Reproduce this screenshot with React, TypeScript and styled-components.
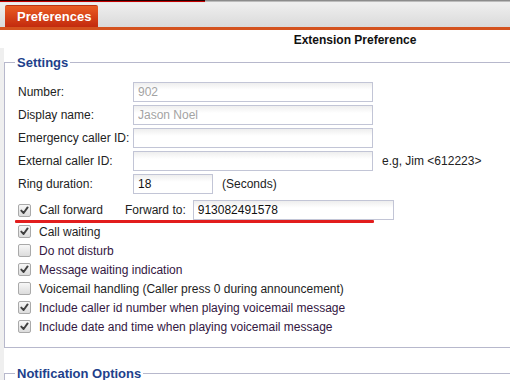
import React from "react";
import styled, { createGlobalStyle } from "styled-components";

const GlobalStyle = createGlobalStyle`
  html, body {
    margin: 0;
    padding: 0;
    background: #ffffff;
    overflow: hidden;
  }
  body {
    font-family: "Liberation Sans", Arial, sans-serif;
    font-size: 12px;
    color: #222222;
  }
`;

const Page = styled.div`
  width: 510px;
  height: 380px;
  overflow: hidden;
`;

const TopStrip = styled.div`
  display: flex;
  height: 3px;
`;

const StripSegment = styled.div<{ $active?: boolean }>`
  flex: ${(p) => (p.$active ? "0 0 205px" : "1")};
  background: ${(p) =>
    p.$active
      ? "linear-gradient(#220000 0 1px, #c40000 1px 2px, #e8e8e8 2px)"
      : "linear-gradient(#8c8c8c 0 1px, #bcbcbc 1px 2px, #eeeeee 2px)"};
`;

const HeaderBar = styled.div`
  display: flex;
  align-items: flex-end;
  height: 24px;
  padding-left: 5px;
  background: linear-gradient(#efefef, #dadada);
  border-bottom: 3px solid #d4531f;
`;

const Tab = styled.div`
  display: flex;
  align-items: center;
  height: 22px;
  width: 93px;
  box-sizing: border-box;
  padding-left: 12px;
  border-top: 1px solid #b83414;
  border-radius: 2px 2px 0 0;
  background: linear-gradient(#ea5c22, #c32a0e);
  color: #ffffff;
  font-weight: bold;
  font-size: 13px;
`;

const Title = styled.div`
  padding-left: 200px;
  text-align: center;
  font-weight: bold;
  font-size: 12px;
  line-height: 15px;
  color: #111111;
  margin-top: 3px;
  height: 15px;
`;

const Section = styled.div`
  border-left: 4px solid #efefef;
  padding-top: 7px;
`;

const Fieldset = styled.fieldset<{ $gap?: number }>`
  margin: ${(p) => p.$gap ?? 0}px 0 0 0;
  padding: 12px 0 11px 13px;
  border: 1px solid #b7b8cc;
  border-right: none;
  min-width: 0;
`;

const Legend = styled.legend`
  margin-left: -3px;
  padding: 0 2px;
  font-size: 13px;
  line-height: 15px;
  font-weight: bold;
  color: #213f8b;
`;

const FormRow = styled.div<{ $top?: number }>`
  position: relative;
  display: flex;
  align-items: center;
  height: 20px;
  margin-top: ${(p) => p.$top ?? 0}px;
`;

const Label = styled.span`
  flex: 0 0 115px;
  white-space: nowrap;
`;

const TextInput = styled.input<{ $width: number; $muted?: boolean }>`
  width: ${(p) => p.$width}px;
  height: 20px;
  box-sizing: border-box;
  margin: 0;
  padding: 0 4px;
  border: 1px solid #c2c5d6;
  border-radius: 0;
  background: linear-gradient(#eeeeee, #ffffff 7px);
  font-family: "Liberation Sans", Arial, sans-serif;
  font-size: 12px;
  color: ${(p) => (p.$muted ? "#a3a3a3" : "#111111")};
  outline: none;
`;

const Hint = styled.span`
  margin-left: 9px;
  color: #222222;
  white-space: nowrap;
`;

const CheckList = styled.div`
  margin-top: 2px;
`;

const CheckRow = styled.div`
  display: flex;
  align-items: center;
  height: 19px;
`;

const Box = styled.span`
  flex: none;
  width: 13px;
  height: 13px;
  box-sizing: border-box;
  border: 1px solid #a9a9a9;
  border-radius: 2px;
  background: linear-gradient(#f7f7f7, #dcdcdc);
  display: inline-flex;
  align-items: center;
  justify-content: center;
`;

const CheckText = styled.span<{ $tone?: "ink" | "plum" }>`
  margin-left: 8px;
  white-space: nowrap;
  color: ${(p) => (p.$tone === "plum" ? "#33173f" : "#1e1e1e")};
`;

const ForwardLabel = styled.span`
  margin-left: 22px;
  margin-right: 7px;
  white-space: nowrap;
`;

const Underline = styled.div`
  position: absolute;
  left: -3px;
  top: 20px;
  width: 359px;
  height: 3px;
  border-radius: 1px;
  background: #e21d1d;
`;

const Spacer = styled.div`
  height: 40px;
`;

const Checkbox = ({ checked }: { checked: boolean }) => (
  <Box>
    {checked && (
      <svg width="9" height="9" viewBox="0 0 9 9">
        <path
          d="M1.3 4.6 L3.6 7 L7.6 1.4"
          fill="none"
          stroke="#404040"
          strokeWidth="1.9"
          strokeLinecap="round"
          strokeLinejoin="round"
        />
      </svg>
    )}
  </Box>
);

const options: { text: string; checked: boolean; tone?: "ink" | "plum" }[] = [
  { text: "Call waiting", checked: true },
  { text: "Do not disturb", checked: false, tone: "plum" },
  { text: "Message waiting indication", checked: true, tone: "plum" },
  { text: "Voicemail handling (Caller press 0 during announcement)", checked: false },
  { text: "Include caller id number when playing voicemail message", checked: true, tone: "plum" },
  { text: "Include date and time when playing voicemail message", checked: true, tone: "plum" },
];

export default function App() {
  return (
    <Page>
      <GlobalStyle />
      <TopStrip>
        <StripSegment $active />
        <StripSegment />
      </TopStrip>
      <HeaderBar>
        <Tab>Preferences</Tab>
      </HeaderBar>
      <Title>Extension Preference</Title>
      <Section>
        <Fieldset>
          <Legend>Settings</Legend>
          <FormRow>
            <Label>Number:</Label>
            <TextInput $width={240} $muted readOnly value="902" />
          </FormRow>
          <FormRow $top={3}>
            <Label>Display name:</Label>
            <TextInput $width={240} $muted readOnly value="Jason Noel" />
          </FormRow>
          <FormRow $top={3}>
            <Label>Emergency caller ID:</Label>
            <TextInput $width={240} readOnly value="" />
          </FormRow>
          <FormRow $top={3}>
            <Label>External caller ID:</Label>
            <TextInput $width={240} readOnly value="" />
            <Hint>e.g, Jim &lt;612223&gt;</Hint>
          </FormRow>
          <FormRow $top={3}>
            <Label>Ring duration:</Label>
            <TextInput $width={80} readOnly value="18" />
            <Hint>(Seconds)</Hint>
          </FormRow>
          <FormRow $top={6}>
            <Checkbox checked />
            <CheckText>Call forward</CheckText>
            <ForwardLabel>Forward to:</ForwardLabel>
            <TextInput $width={201} readOnly value="913082491578" />
            <Underline />
          </FormRow>
          <CheckList>
            {options.map((o) => (
              <CheckRow key={o.text}>
                <Checkbox checked={o.checked} />
                <CheckText $tone={o.tone}>{o.text}</CheckText>
              </CheckRow>
            ))}
          </CheckList>
        </Fieldset>
        <Fieldset $gap={18}>
          <Legend>Notification Options</Legend>
          <Spacer />
        </Fieldset>
      </Section>
    </Page>
  );
}
